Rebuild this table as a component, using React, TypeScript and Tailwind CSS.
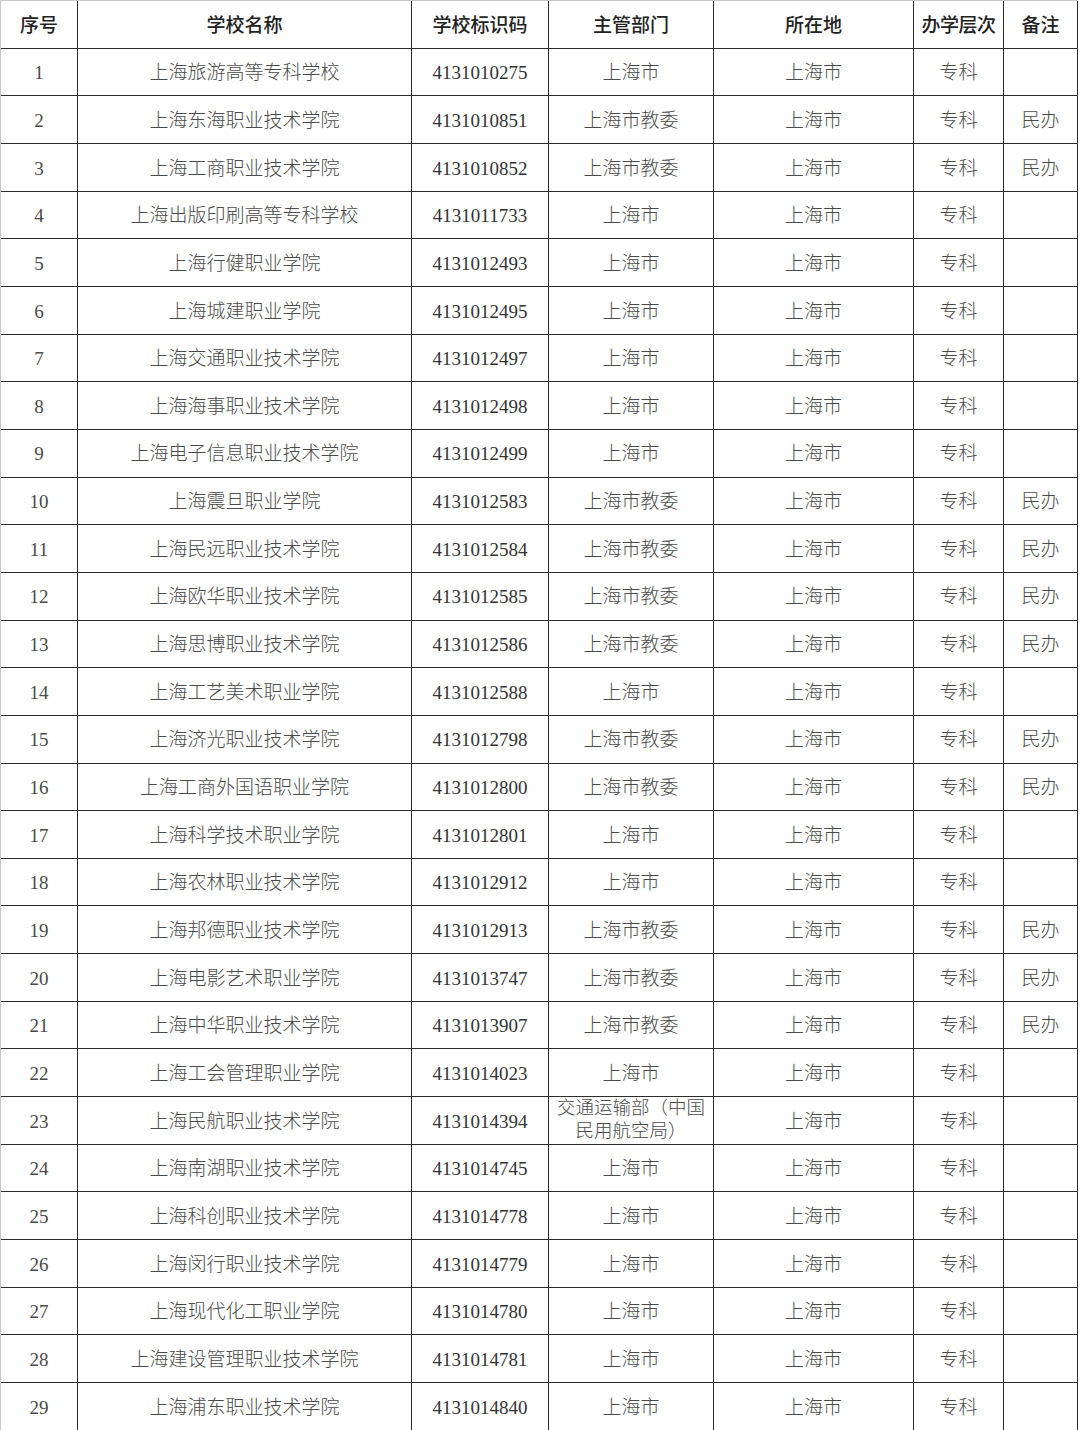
const rows: [string, string, string, string][] = [
  ["上海旅游高等专科学校", "4131010275", "上海市", ""],
  ["上海东海职业技术学院", "4131010851", "上海市教委", "民办"],
  ["上海工商职业技术学院", "4131010852", "上海市教委", "民办"],
  ["上海出版印刷高等专科学校", "4131011733", "上海市", ""],
  ["上海行健职业学院", "4131012493", "上海市", ""],
  ["上海城建职业学院", "4131012495", "上海市", ""],
  ["上海交通职业技术学院", "4131012497", "上海市", ""],
  ["上海海事职业技术学院", "4131012498", "上海市", ""],
  ["上海电子信息职业技术学院", "4131012499", "上海市", ""],
  ["上海震旦职业学院", "4131012583", "上海市教委", "民办"],
  ["上海民远职业技术学院", "4131012584", "上海市教委", "民办"],
  ["上海欧华职业技术学院", "4131012585", "上海市教委", "民办"],
  ["上海思博职业技术学院", "4131012586", "上海市教委", "民办"],
  ["上海工艺美术职业学院", "4131012588", "上海市", ""],
  ["上海济光职业技术学院", "4131012798", "上海市教委", "民办"],
  ["上海工商外国语职业学院", "4131012800", "上海市教委", "民办"],
  ["上海科学技术职业学院", "4131012801", "上海市", ""],
  ["上海农林职业技术学院", "4131012912", "上海市", ""],
  ["上海邦德职业技术学院", "4131012913", "上海市教委", "民办"],
  ["上海电影艺术职业学院", "4131013747", "上海市教委", "民办"],
  ["上海中华职业技术学院", "4131013907", "上海市教委", "民办"],
  ["上海工会管理职业学院", "4131014023", "上海市", ""],
  ["上海民航职业技术学院", "4131014394", "交通运输部（中国\n民用航空局）", ""],
  ["上海南湖职业技术学院", "4131014745", "上海市", ""],
  ["上海科创职业技术学院", "4131014778", "上海市", ""],
  ["上海闵行职业技术学院", "4131014779", "上海市", ""],
  ["上海现代化工职业学院", "4131014780", "上海市", ""],
  ["上海建设管理职业技术学院", "4131014781", "上海市", ""],
  ["上海浦东职业技术学院", "4131014840", "上海市", ""],
];

const grid = "grid grid-cols-[77px_334px_137px_165px_200px_90px_74px] h-[47.66px] border-b border-[#2b2b2b]";
const cell = "flex items-center justify-center text-center border-r border-[#2b2b2b]";

export default function App() {
  return (
    <div className="w-[1080px] h-[1430px] bg-white overflow-hidden">
      <div className="w-[1078px] border-l border-t border-l-[#c8c8c8] border-t-[#c8c8c8]">
        <div className={grid + " text-[19px] font-medium text-[#222]"} style={{ fontFamily: '"Noto Sans CJK SC", sans-serif' }}>
          <div className={cell}>序号</div>
          <div className={cell}>学校名称</div>
          <div className={cell}>学校标识码</div>
          <div className={cell}>主管部门</div>
          <div className={cell}>所在地</div>
          <div className={cell + " tracking-[-0.5px]"}>办学层次</div>
          <div className={cell}>备注</div>
        </div>
        {rows.map((r, i) => (
          <div
            key={i}
            className={grid + " text-[19px] font-light text-[#4a4a4a]"}
            style={{ fontFamily: '"Liberation Serif", "Noto Sans CJK SC", serif' }}
          >
            <div className={cell + " pt-[3px]"}>{i + 1}</div>
            <div className={cell + " pt-[3px]"}>{r[0]}</div>
            <div className={cell + " pt-[3px] font-normal text-[#333]"}>{r[1]}</div>
            <div className={cell + (r[2].includes("\n") ? " whitespace-pre-line leading-[23px] text-[18.5px]" : " pt-[3px]")}>{r[2]}</div>
            <div className={cell + " pt-[3px]"}>上海市</div>
            <div className={cell + " pt-[3px]"}>专科</div>
            <div className={cell + " pt-[3px]"}>{r[3]}</div>
          </div>
        ))}
      </div>
    </div>
  );
}
